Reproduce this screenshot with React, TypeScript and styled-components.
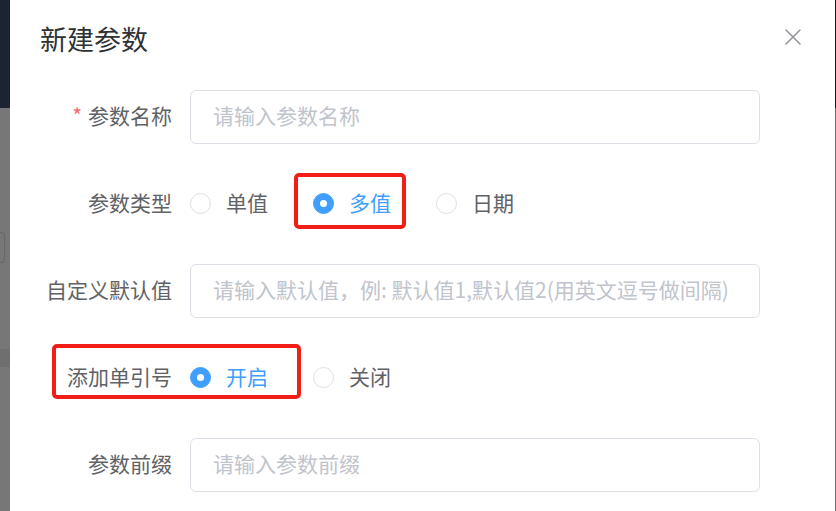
import React from "react";
import styled, { createGlobalStyle, css } from "styled-components";

const GlobalStyle = createGlobalStyle`
  html, body { margin: 0; padding: 0; background: #767676; }
  body {
    font-family: "Noto Sans CJK SC", "Noto Sans", "Liberation Sans", sans-serif;
    -webkit-font-smoothing: antialiased;
  }
  * { box-sizing: border-box; }
`;

const Screen = styled.div`
  display: grid;
  grid-template-columns: 10px 825px 1px;
  width: 836px;
  height: 511px;
  overflow: hidden;
`;

const BackdropStrip = styled.div<{ $edge?: boolean }>`
  display: flex;
  flex-direction: column;
  background: ${(p) => (p.$edge ? "#6a6a6a" : "#777777")};
`;

const BackdropHeader = styled.div<{ $edge?: boolean }>`
  height: 108px;
  flex: none;
  background: ${(p) => (p.$edge ? "#15181f" : "#1c2434")};
`;

const GhostField = styled.div`
  margin-top: 124px;
  width: 5px;
  height: 31px;
  border: 1px solid #676767;
  border-left: none;
  border-radius: 0 4px 4px 0;
`;

const GhostBand = styled.div`
  margin-top: 86px;
  height: 18px;
  background: #6f6f6f;
`;

const Dialog = styled.div`
  background: #ffffff;
  padding: 21px 34px 0 30px;
  display: flex;
  flex-direction: column;
`;

const DialogHeader = styled.div`
  display: flex;
  justify-content: space-between;
  align-items: flex-start;
`;

const Title = styled.h2`
  margin: 0;
  padding-bottom: 2px;
  font-size: 27px;
  line-height: 36px;
  font-weight: 400;
  color: #303133;
`;

const CloseButton = styled.button`
  margin-top: 8px;
  width: 16px;
  height: 16px;
  padding: 0;
  border: none;
  background: transparent;
  display: flex;
  color: #909399;
`;

const Form = styled.form`
  margin-top: 31px;
  width: 720px;
  display: flex;
  flex-direction: column;
  gap: 33px;
`;

const FormItem = styled.div`
  position: relative;
  display: flex;
  align-items: center;
  height: 54px;
`;

const Label = styled.label`
  flex: none;
  width: 150px;
  padding-right: 18px;
  padding-bottom: 4px;
  text-align: right;
  font-size: 21px;
  line-height: 30px;
  color: #606266;
  white-space: nowrap;
`;

const Asterisk = styled.span`
  color: #f56c6c;
  margin-right: 6px;
`;

const TextInput = styled.input`
  flex: 1;
  height: 54px;
  border: 1px solid #dcdfe6;
  border-radius: 6px;
  padding: 0 22px 4px;
  font-family: inherit;
  font-size: 21px;
  color: #606266;
  background: #fff;
  outline: none;
  &::placeholder {
    color: #c0c4cc;
  }
`;

const RadioGroup = styled.div`
  display: flex;
  align-items: center;
`;

const RadioItem = styled.label<{ $checked?: boolean }>`
  display: flex;
  align-items: center;
  margin-right: 45px;
  font-size: 21px;
  line-height: 30px;
  color: ${(p) => (p.$checked ? "#409eff" : "#606266")};
  white-space: nowrap;
`;

const RadioCircle = styled.span<{ $checked?: boolean }>`
  position: relative;
  width: 21px;
  height: 21px;
  margin-top: -1px;
  border-radius: 50%;
  border: 1px solid #dcdfe6;
  background: #fff;
  flex: none;
  ${(p) =>
    p.$checked &&
    css`
      border-color: #409eff;
      background: #409eff;
      &::after {
        content: "";
        position: absolute;
        left: 50%;
        top: 50%;
        width: 7px;
        height: 7px;
        margin: -3.5px 0 0 -3.5px;
        border-radius: 50%;
        background: #fff;
      }
    `}
`;

const RadioText = styled.span`
  padding-left: 15px;
  padding-bottom: 4px;
`;

const Highlight = styled.div<{ $left: number; $top: number; $width: number; $height: number }>`
  position: absolute;
  left: ${(p) => p.$left}px;
  top: ${(p) => p.$top}px;
  width: ${(p) => p.$width}px;
  height: ${(p) => p.$height}px;
  border: 4px solid #f21d17;
  border-radius: 5px;
  pointer-events: none;
`;

type Option = { label: string; checked?: boolean };

const Radios: React.FC<{ options: Option[] }> = ({ options }) => (
  <RadioGroup>
    {options.map((o) => (
      <RadioItem key={o.label} $checked={o.checked}>
        <RadioCircle $checked={o.checked} />
        <RadioText>{o.label}</RadioText>
      </RadioItem>
    ))}
  </RadioGroup>
);

const CloseIcon = () => (
  <svg width="16" height="16" viewBox="0 0 16 16" fill="none">
    <path d="M1 1 L15 15 M15 1 L1 15" stroke="currentColor" strokeWidth="1.5" strokeLinecap="round" />
  </svg>
);

export default function App() {
  return (
    <>
      <GlobalStyle />
      <Screen>
        <BackdropStrip>
          <BackdropHeader />
          <GhostField />
          <GhostBand />
        </BackdropStrip>
        <Dialog>
          <DialogHeader>
            <Title>新建参数</Title>
            <CloseButton type="button" aria-label="关闭">
              <CloseIcon />
            </CloseButton>
          </DialogHeader>
          <Form onSubmit={(e) => e.preventDefault()}>
            <FormItem>
              <Label>
                <Asterisk>*</Asterisk>参数名称
              </Label>
              <TextInput placeholder="请输入参数名称" />
            </FormItem>
            <FormItem>
              <Label>参数类型</Label>
              <Radios options={[{ label: "单值" }, { label: "多值", checked: true }, { label: "日期" }]} />
              <Highlight $left={254} $top={-4} $width={112} $height={56} />
            </FormItem>
            <FormItem>
              <Label>自定义默认值</Label>
              <TextInput placeholder="请输入默认值，例: 默认值1,默认值2(用英文逗号做间隔)" />
            </FormItem>
            <FormItem>
              <Label>添加单引号</Label>
              <Radios options={[{ label: "开启", checked: true }, { label: "关闭" }]} />
              <Highlight $left={12} $top={-7} $width={249} $height={55} />
            </FormItem>
            <FormItem>
              <Label>参数前缀</Label>
              <TextInput placeholder="请输入参数前缀" />
            </FormItem>
          </Form>
        </Dialog>
        <BackdropStrip $edge>
          <BackdropHeader $edge />
        </BackdropStrip>
      </Screen>
    </>
  );
}
